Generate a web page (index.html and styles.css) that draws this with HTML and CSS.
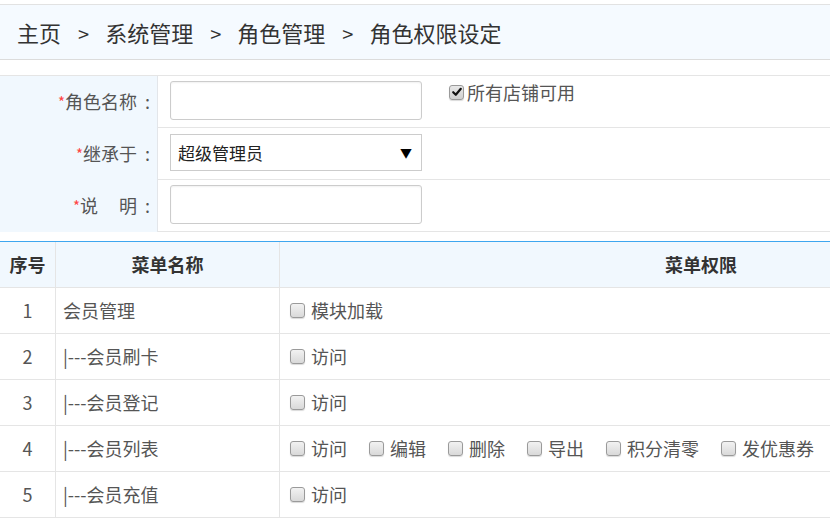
FILE: index.html
```html
<!DOCTYPE html>
<html lang="zh-CN">
<head>
<meta charset="utf-8">
<title>角色权限设定</title>
<link rel="stylesheet" href="styles.css">
</head>
<body>
<div class="page">
  <div class="crumb">
    <span>主页</span><span class="sep">&gt;</span><span>系统管理</span><span class="sep">&gt;</span><span>角色管理</span><span class="sep">&gt;</span><span>角色权限设定</span>
  </div>

  <div class="form">
    <div class="frow">
      <div class="flabel"><span class="req">*</span>角色名称<span class="colon">:</span></div>
      <div class="fval">
        <div class="input"></div>
        <label class="allshop"><span class="cb checked"><svg viewBox="0 0 12 12" width="12" height="12"><path d="M2.2 6.2 L4.8 8.8 L9.8 2.8" fill="none" stroke="#111" stroke-width="2.2" stroke-linecap="round" stroke-linejoin="round"/></svg></span>所有店铺可用</label>
      </div>
    </div>
    <div class="frow">
      <div class="flabel"><span class="req">*</span>继承于<span class="colon">:</span></div>
      <div class="fval">
        <div class="select"><span>超级管理员</span><span class="arrow">▼</span></div>
      </div>
    </div>
    <div class="frow">
      <div class="flabel"><span class="req">*</span>说<span class="gap"></span>明<span class="colon">:</span></div>
      <div class="fval">
        <div class="input"></div>
      </div>
    </div>
  </div>

  <div class="table">
    <div class="trow thead">
      <div class="c1">序号</div>
      <div class="c2">菜单名称</div>
      <div class="c3">菜单权限</div>
    </div>
    <div class="trow">
      <div class="c1">1</div>
      <div class="c2">会员管理</div>
      <div class="c3 perms"><label class="perm"><span class="cb"></span>模块加载</label></div>
    </div>
    <div class="trow">
      <div class="c1">2</div>
      <div class="c2">|---会员刷卡</div>
      <div class="c3 perms"><label class="perm"><span class="cb"></span>访问</label></div>
    </div>
    <div class="trow">
      <div class="c1">3</div>
      <div class="c2">|---会员登记</div>
      <div class="c3 perms"><label class="perm"><span class="cb"></span>访问</label></div>
    </div>
    <div class="trow">
      <div class="c1">4</div>
      <div class="c2">|---会员列表</div>
      <div class="c3 perms">
        <label class="perm"><span class="cb"></span>访问</label>
        <label class="perm"><span class="cb"></span>编辑</label>
        <label class="perm"><span class="cb"></span>删除</label>
        <label class="perm"><span class="cb"></span>导出</label>
        <label class="perm"><span class="cb"></span>积分清零</label>
        <label class="perm"><span class="cb"></span>发优惠券</label>
      </div>
    </div>
    <div class="trow">
      <div class="c1">5</div>
      <div class="c2">|---会员充值</div>
      <div class="c3 perms"><label class="perm"><span class="cb"></span>访问</label></div>
    </div>
  </div>
</div>
</body>
</html>
```

FILE: styles.css
```css
html, body {
  margin: 0;
  padding: 0;
  background: #fff;
  overflow: hidden;
}
body {
  font-family: "Microsoft YaHei", "Noto Sans CJK SC", "Noto Sans", sans-serif;
  color: #555;
  font-size: 18px;
}
.page {
  width: 830px;
  overflow: hidden;
  padding-top: 4px;
}
.crumb {
  height: 54px;
  line-height: 54px;
  border-top: 1px solid #e2e2e2;
  border-bottom: 1px solid #dcdcdc;
  background: #f5faff;
  padding-left: 17px;
  font-size: 22px;
  color: #333;
  white-space: nowrap;
}
.crumb .sep {
  margin: 0 16px 0 17px;
  font-size: 20px;
}

.form {
  margin-top: 15px;
  border-top: 1px solid #e5e5e5;
}
.frow {
  display: grid;
  grid-template-columns: 158px 1fr;
  height: 51px;
  border-bottom: 1px solid #e5e5e5;
}
.flabel {
  background: #f1f8fe;
  border-right: 1px solid #e3e6ea;
  text-align: right;
  padding-right: 7px;
  line-height: 51px;
  color: #555;
}
.colon {
  margin-left: 8px;
}
.req {
  color: #f44;
  font-size: 15px;
  position: relative;
  top: -1px;
}
.gap {
  display: inline-block;
  width: 21px;
}
.fval {
  display: flex;
  align-items: flex-start;
  padding-left: 12px;
  padding-top: 5px;
}
.input {
  width: 250px;
  height: 37px;
  border: 1px solid #ccc;
  border-radius: 3px;
  box-shadow: inset 0 1px 2px rgba(0,0,0,0.06);
  background: #fff;
}
.select {
  margin-top: 1px;
  height: 35px;
  border: 1px solid #ccc;
  display: flex;
  align-items: center;
  justify-content: space-between;
  padding: 0 9px 0 7px;
  box-sizing: content-box;
  font-size: 17px;
  color: #222;
  width: 234px;
}
.select .arrow {
  font-size: 12px;
  color: #000;
}
.allshop {
  display: flex;
  align-items: center;
  margin-left: 27px;
  margin-top: -1px;
  color: #555;
  line-height: 24px;
}
.allshop .cb {
  margin-right: 3px;
}

.cb {
  display: inline-flex;
  align-items: center;
  justify-content: center;
  width: 13px;
  height: 13px;
  border: 1px solid #9a9a9a;
  border-radius: 3px;
  background: linear-gradient(#f2f2f2, #d9d9d9);
  box-shadow: 0 1px 1px rgba(0,0,0,0.15);
  flex: none;
}
.cb.checked {
  background: linear-gradient(#e8e8e8, #cfcfcf);
}

.table {
  margin-top: 9px;
  width: 1122px;
  border-top: 1px solid #3ea6ef;
}
.trow {
  display: grid;
  grid-template-columns: 56px 224px 842px;
  height: 45px;
  border-bottom: 1px solid #e5e5e5;
}
.trow > div {
  line-height: 45px;
  white-space: nowrap;
}
.c1 {
  text-align: center;
  border-right: 1px solid #e5e5e5;
}
.c2 {
  border-right: 1px solid #e5e5e5;
  padding-left: 7px;
}
.thead {
  background: #f1f8fe;
}
.thead > div {
  font-weight: bold;
  color: #333;
  text-align: center;
  padding-left: 0;
}
.perms {
  display: flex;
  align-items: center;
  padding-left: 10px;
}
.perm {
  display: flex;
  align-items: center;
  margin-right: 22px;
}
.perm .cb {
  margin-right: 6px;
}
```
